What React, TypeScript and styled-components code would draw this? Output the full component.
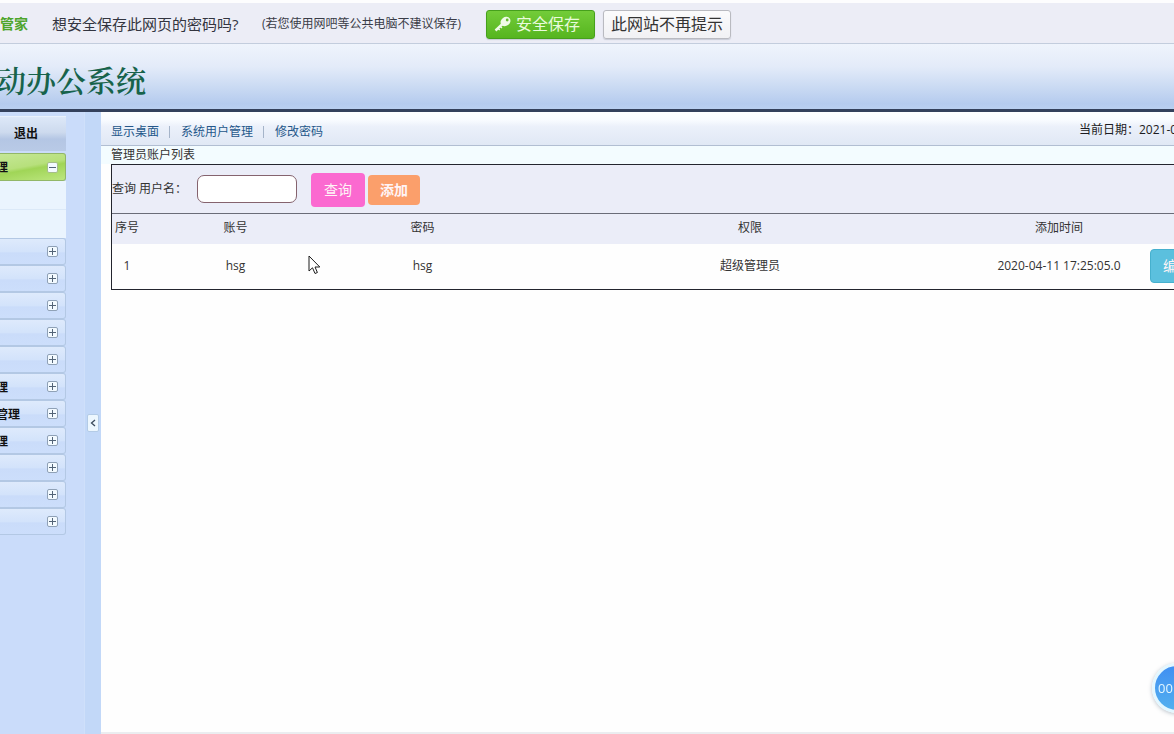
import React from 'react';
import styled, { createGlobalStyle } from 'styled-components';

const Global = createGlobalStyle`
  *, *::before, *::after { box-sizing: border-box; }
  body {
    margin: 0;
    overflow: hidden;
    background: #fefefe;
    color: #333;
    font: 12px/18px "Open Sans", "Noto Sans CJK SC", sans-serif;
  }
  button, input { font: inherit; margin: 0; }
  a { text-decoration: none; color: inherit; }
`;

const Page = styled.div`
  display: flex;
  flex-direction: column;
  min-height: 100vh;
  overflow: hidden;
  white-space: nowrap;
`;

const PromptBar = styled.section`
  display: flex;
  align-items: center;
  height: 44px;
  padding-top: 2px;
  border-top: 3px solid #fdfdfe;
  border-bottom: 1px solid #c3cddd;
  background: #ecedf6;
  line-height: 24px;
`;

const Brand = styled.strong`
  width: 52px;
  font-size: 14px;
  color: #4ea52c;
`;

const Question = styled.span`
  width: 206px;
  font-size: 15px;
  color: #333540;
`;

const Hint = styled.span`
  width: 228px;
  padding-left: 4px;
  color: #3a3c47;
`;

const PromptButton = styled.button<{ $primary?: boolean }>`
  display: flex;
  align-items: center;
  gap: 4px;
  height: 29px;
  margin-right: 8px;
  padding: 0 7px;
  border: 1px solid ${p => (p.$primary ? '#46a01c' : '#b9bac0')};
  border-radius: 3px;
  background: ${p => (p.$primary ? 'linear-gradient(#73cc39, #56b51f)' : 'linear-gradient(#fbfbfc, #f1f1f4)')};
  box-shadow: 0 1px 1px rgba(60, 70, 90, 0.2);
  color: ${p => (p.$primary ? '#e9fbdc' : '#333')};
  font-size: 16px;
  ${p => p.$primary && 'padding-right: 14px;'}
`;

const Banner = styled.header`
  height: 68px;
  border-bottom: 3px solid #34415c;
  background: linear-gradient(#eff4fc 0%, #e3ebf9 35%, #cbdbf3 65%, #b5cbee 92%, #b9cff0 100%);
`;

const SystemName = styled.h1`
  margin: 0 0 0 -4px;
  padding-top: 15px;
  font: 600 30px/46px "Liberation Serif", "Noto Serif CJK SC", "Noto Sans CJK SC", serif;
  color: #17634b;
`;

const Body = styled.div`
  display: flex;
  flex: 1;
`;

const Sidebar = styled.nav`
  width: 84px;
  padding: 4px 18px 0 0;
  background: #cadcfa;
`;

const ExitButton = styled.button`
  display: block;
  width: 100%;
  height: 35px;
  margin-bottom: 2px;
  padding: 0 0 0 14px;
  border: 0;
  border-top: 1px solid #e9f1fb;
  background: linear-gradient(#dde8f8, #cddaee 45%, #b4c6e4 65%, #b9cae6);
  color: #111;
  font-weight: 700;
  text-align: left;
`;

const MenuHead = styled.button<{ $open?: boolean }>`
  display: flex;
  align-items: center;
  justify-content: space-between;
  width: 100%;
  height: ${p => (p.$open ? 28 : 27)}px;
  padding: 0 7px 0 0;
  border: 1px solid ${p => (p.$open ? '#92b768' : '#b3c8e4')};
  border-left: 0;
  border-radius: 0 3px 3px 0;
  background: ${p => (p.$open
    ? 'linear-gradient(170deg, #c5e796 0%, #b7e07c 45%, #a0d557 55%, #bce67f 100%)'
    : 'linear-gradient(#deeafc, #d3e3fb 50%, #cadcfa 56%, #ccdefb)')};
  color: #111;
  font-weight: 700;

  span {
    margin-left: -4px;
    padding-top: 2px;
  }
`;

const SubMenu = styled.div`
  height: 57px;
  background: #eaf4fe;
`;

const SubLink = styled.a`
  display: block;
  height: 28px;

  & + & { border-top: 1px solid #dbe9f8; }
`;

const Splitter = styled.div`
  display: flex;
  align-items: center;
  width: 17px;
  padding-left: 2px;
  border-left: 1px solid #cfe0fa;
  background: #c2d8f8;
`;

const Collapse = styled.button`
  display: flex;
  align-items: center;
  justify-content: center;
  width: 12px;
  height: 18px;
  padding: 0;
  border: 1px solid #b3cbe6;
  border-radius: 2px;
  background: #edf7fe;
  color: #3b4a5c;
`;

const Main = styled.main`
  flex: 1;
  min-width: 0;
  border-bottom: 2px solid #ebedf0;
`;

const TopNav = styled.div`
  display: flex;
  align-items: center;
  justify-content: space-between;
  height: 34px;
  padding: 6px 0 0 10px;
  border-bottom: 1px solid #b1bed2;
  background: linear-gradient(#fdfeff 0%, #f8fbff 25%, #ebf0fa 45%, #e0e8f5 100%);
`;

const Links = styled.div`
  display: flex;
  align-items: center;
`;

const NavLink = styled.a`
  color: #24578a;

  & + & {
    display: flex;
    align-items: center;
  }
  & + &::before {
    content: '';
    height: 12px;
    margin: 0 11px 0 10px;
    border-left: 1px solid #a5b4c9;
  }
`;

const Today = styled.span`
  width: 95px;
  padding-bottom: 3px;
  overflow: hidden;
  color: #1c1c22;
`;

const Title = styled.h2`
  margin: 0;
  padding-left: 10px;
  background: #f3fcff;
  font-size: 12px;
  font-weight: 400;
  line-height: 18px;
`;

const ListArea = styled.section`
  position: relative;
  padding-left: 10px;
  overflow: hidden;
`;

const Panel = styled.div`
  width: calc(100% + 100px);
  border: 1px solid #23252e;
`;

const SearchForm = styled.form`
  display: flex;
  align-items: center;
  height: 49px;
  padding-top: 2px;
  border-bottom: 1px solid #6a6c78;
  background: #ebedf8;

  label {
    width: 85px;
    padding-bottom: 2px;
  }
`;

const NameInput = styled.input`
  width: 100px;
  height: 28px;
  margin: 0 14px 2px 0;
  border: 1px solid #85636e;
  border-radius: 7px;
  background: #fff;
`;

const ActionButton = styled.button<{ $tone: 'pink' | 'orange' | 'blue' }>`
  width: ${p => (p.$tone === 'orange' ? 52 : 54)}px;
  height: ${p => (p.$tone === 'orange' ? 30 : 34)}px;
  margin-right: 3px;
  padding: 0;
  border: ${p => (p.$tone === 'blue' ? '1px solid #46b0ce' : '0')};
  border-radius: 4px;
  background: ${p => ({ pink: '#fb69d0', orange: '#fb9f6b', blue: '#5bc0de' }[p.$tone])};
  color: #fff4f6;
  font-size: 14px;
  font-weight: ${p => (p.$tone === 'orange' ? 700 : 400)};
`;

const UserTable = styled.table`
  width: 100%;
  table-layout: fixed;
  border-collapse: collapse;
  text-align: center;

  th {
    height: 30px;
    padding: 0 0 2px;
    background: #ebedf8;
    font-weight: 400;
  }
  td {
    height: 45px;
    padding: 0 0 2px;
  }
  td:last-child {
    padding-left: 16px;
    text-align: left;
  }
`;

const Pointer = styled.svg`
  position: absolute;
  left: 207px;
  top: 91px;
`;

const Recorder = styled.div`
  position: fixed;
  right: -28px;
  bottom: 21px;
  width: 50px;
  height: 50px;
  padding-left: 3px;
  border: 3px solid #e3f7ff;
  border-radius: 50%;
  background: linear-gradient(#408ff2, #52b0ef);
  box-shadow: 0 1px 4px rgba(80, 100, 120, 0.4);
  color: #e2f6ff;
  font-size: 13px;
  line-height: 44px;
`;

const ToggleIcon = ({ open }: { open?: boolean }) => (
  <svg width="11" height="11" viewBox="0 0 11 11" aria-hidden="true">
    <rect x="0.5" y="0.5" width="10" height="10" rx="1.5" fill="#f3faff" stroke={open ? '#a5bd8a' : '#8fa1b6'} />
    <path d={open ? 'M2 5.5h7' : 'M2 5.5h7M5.5 2v7'} stroke="#536477" />
  </svg>
);

const KeyIcon = () => (
  <svg width="18" height="16" viewBox="0 0 18 16" aria-hidden="true">
    <ellipse cx="11.5" cy="5.5" rx="5.2" ry="4.4" transform="rotate(-35 11.5 5.5)" fill="#effbe8" />
    <path d="M9 7.5L1.5 14.5" stroke="#effbe8" strokeWidth="2.4" fill="none" />
    <path d="M4 12.5l1.8 1.6M6.2 10.5l1.8 1.6" stroke="#effbe8" strokeWidth="1.4" fill="none" />
    <circle cx="13.2" cy="4" r="1.4" fill="#66bd30" />
  </svg>
);

const menu = ['', '', '', '', '', '理', '管理', '理', '', '', ''];

export default function App() {
  return (
    <Page>
      <Global />
      <PromptBar>
        <Brand>管家</Brand>
        <Question>想安全保存此网页的密码吗?</Question>
        <Hint>(若您使用网吧等公共电脑不建议保存)</Hint>
        <PromptButton $primary type="button"><KeyIcon />安全保存</PromptButton>
        <PromptButton type="button">此网站不再提示</PromptButton>
      </PromptBar>
      <Banner><SystemName>动办公系统</SystemName></Banner>
      <Body>
        <Sidebar>
          <ExitButton type="button">退出</ExitButton>
          <MenuHead $open type="button"><span>理</span><ToggleIcon open /></MenuHead>
          <SubMenu><SubLink href="#" /><SubLink href="#" /></SubMenu>
          {menu.map((name, i) => (
            <MenuHead key={i} type="button"><span>{name}</span><ToggleIcon /></MenuHead>
          ))}
        </Sidebar>
        <Splitter>
          <Collapse type="button">
            <svg width="6" height="8" viewBox="0 0 6 8" aria-hidden="true">
              <path d="M5 1L1.5 4 5 7" fill="none" stroke="currentColor" strokeWidth="1.3" />
            </svg>
          </Collapse>
        </Splitter>
        <Main>
          <TopNav>
            <Links>
              <NavLink href="#">显示桌面</NavLink>
              <NavLink href="#">系统用户管理</NavLink>
              <NavLink href="#">修改密码</NavLink>
            </Links>
            <Today>当前日期：2021-0</Today>
          </TopNav>
          <Title>管理员账户列表</Title>
          <ListArea>
            <Panel>
              <SearchForm onSubmit={e => e.preventDefault()}>
                <label htmlFor="username">查询 用户名：</label>
                <NameInput id="username" type="text" />
                <ActionButton $tone="pink" type="submit">查询</ActionButton>
                <ActionButton $tone="orange" type="button">添加</ActionButton>
              </SearchForm>
              <UserTable>
                <colgroup>
                  <col width="30" />
                  <col width="187" />
                  <col width="187" />
                  <col />
                  <col width="150" />
                  <col width="139" />
                </colgroup>
                <thead>
                  <tr><th>序号</th><th>账号</th><th>密码</th><th>权限</th><th>添加时间</th><th /></tr>
                </thead>
                <tbody>
                  <tr>
                    <td>1</td>
                    <td>hsg</td>
                    <td>hsg</td>
                    <td>超级管理员</td>
                    <td>2020-04-11 17:25:05.0</td>
                    <td><ActionButton $tone="blue" type="button">编辑</ActionButton></td>
                  </tr>
                </tbody>
              </UserTable>
            </Panel>
            <Pointer width="13" height="20" viewBox="0 0 13 20" aria-hidden="true">
              <path d="M1 1v15l3.5-3.2L7 18.5l2.4-1L7 12h4.8z" fill="#fff" stroke="#1d1d1d" />
            </Pointer>
          </ListArea>
        </Main>
      </Body>
      <Recorder>00</Recorder>
    </Page>
  );
}
